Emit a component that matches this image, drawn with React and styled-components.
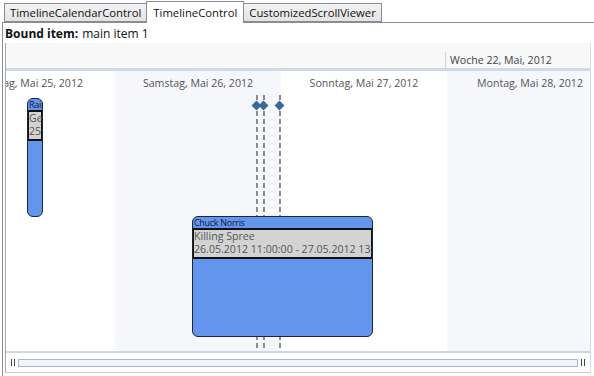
import React from 'react'
import styled, { createGlobalStyle } from 'styled-components'

const Global = createGlobalStyle`
body {
  margin: 0;
  background: #fff;
  font-family: "Open Sans", "Liberation Sans", sans-serif;
}
`

const Page = styled.div`
width: 594px;
height: 376px;
display: flex;
flex-direction: column;
overflow: hidden;
background: #fff;
`

const TabStrip = styled.div`
display: flex;
align-items: flex-end;
height: 22px;
padding-left: 4px;
position: relative;
z-index: 1;
`

const Tab = styled.div`
height: ${p => (p.active ? '22px' : '19px')};
margin-bottom: ${p => (p.active ? '-1px' : '0')};
padding: 0 ${p => (p.active ? '6px' : '5px')};
margin-left: ${p => (p.active ? '-1px' : '0')};
margin-right: ${p => (p.active ? '-1px' : '0')};
border: 1px solid #898c95;
border-bottom: ${p => (p.active ? 'none' : '1px solid #898c95')};
background: ${p => (p.active ? '#fff' : 'linear-gradient(#f3f3f3, #e3e3e3)')};
font-size: 11.3px;
color: #111;
display: flex;
align-items: center;
box-sizing: border-box;
position: relative;
z-index: ${p => (p.active ? 2 : 1)};
& + & {
  border-left: ${p => (p.active ? '1px solid #898c95' : 'none')};
}
`

const Panel = styled.div`
flex: 1;
border-top: 1px solid #898c95;
border-left: 1px solid #8c8e94;
margin-left: 2px;
display: flex;
flex-direction: column;
padding: 0 3px 3px 2px;
`

const BoundLine = styled.div`
font-size: 12px;
color: #111;
height: 19px;
display: flex;
align-items: center;
padding-top: 1px;
b {
  font-weight: 700;
  margin-right: 4px;
}
`

const Timeline = styled.div`
flex: 1;
border-left: 1px solid #a6a6a6;
border-right: 1px solid #d6dbe4;
border-bottom: 1px solid #c3cad6;
display: flex;
flex-direction: column;
overflow: hidden;
`

const Header = styled.div`
height: 25px;
background: #f8f8f8;
display: flex;
justify-content: flex-end;
border-bottom: 3px solid #cfdae8;
`

const WeekCell = styled.div`
width: 140px;
margin-top: 9px;
border-left: 1px solid #d4d4d4;
font-size: 10.6px;
color: #444;
padding-left: 4px;
display: flex;
align-items: center;
`

const Body = styled.div`
flex: 1;
position: relative;
overflow: hidden;
`

const Days = styled.div`
display: flex;
height: 100%;
margin-left: -57px;
`

const Day = styled.div`
flex: 0 0 166px;
background: ${p => (p.shaded ? '#f5f7fb' : '#fff')};
font-size: 10.6px;
color: #555;
text-align: center;
padding-top: 5px;
white-space: nowrap;
`

const Marker = styled.div`
position: absolute;
top: 24px;
bottom: 0;
width: 2px;
background: repeating-linear-gradient(#8c8c8c 0 5px, transparent 5px 8px);
`

const Diamond = styled.div`
position: absolute;
top: 7px;
left: -3px;
width: 7px;
height: 7px;
background: #3a679e;
transform: rotate(45deg);
`

const Item = styled.div`
position: absolute;
background: #6495ed;
border: 1px solid #1b2638;
border-radius: 6px;
overflow: hidden;
`

const ItemTitle = styled.div`
height: 11px;
font-size: 9px;
line-height: 11px;
color: #0c1a40;
padding-left: 1px;
white-space: nowrap;
letter-spacing: -0.3px;
`

const ItemDetail = styled.div`
background: #d3d3d3;
border: 1px solid #111;
border-width: 2px 1px 2px 1px;
font-size: 10.6px;
line-height: 13px;
color: #555;
white-space: nowrap;
padding: 0 1px 1px 0;
`

const Scroll = styled.div`
height: 19px;
border-top: 2px solid #cdd6e2;
display: flex;
align-items: center;
padding: 0 5px 0 5px;
gap: 3px;
`

const Grip = styled.div`
width: 4px;
height: 7px;
border-left: 1px solid #444;
border-right: 1px solid #444;
box-sizing: border-box;
`

const Track = styled.div`
flex: 1;
height: 6px;
border: 1px solid #a8b8cc;
background: #f2f5f9;
`

const markers = [250, 257, 273]

const App = () => {
    return (
        <Page>
            <Global />
            <TabStrip>
                <Tab>TimelineCalendarControl</Tab>
                <Tab active>TimelineControl</Tab>
                <Tab>CustomizedScrollViewer</Tab>
            </TabStrip>
            <Panel>
                <BoundLine><b>Bound item:</b> main item 1</BoundLine>
                <Timeline>
                    <Header>
                        <WeekCell>Woche 22, Mai, 2012</WeekCell>
                    </Header>
                    <Body>
                        <Days>
                            <Day>Freitag, Mai 25, 2012</Day>
                            <Day shaded>Samstag, Mai 26, 2012</Day>
                            <Day>Sonntag, Mai 27, 2012</Day>
                            <Day shaded>Montag, Mai 28, 2012</Day>
                        </Days>
                        {markers.map(x => (
                            <Marker key={x} style={{ left: x }}>
                                <Diamond />
                            </Marker>
                        ))}
                        <Item style={{ left: 21, top: 27, width: 14, height: 117 }}>
                            <ItemTitle>Rainer</ItemTitle>
                            <ItemDetail>Ge<br />25</ItemDetail>
                        </Item>
                        <Item style={{ left: 186, top: 145, width: 179, height: 119 }}>
                            <ItemTitle>Chuck Norris</ItemTitle>
                            <ItemDetail>Killing Spree<br />26.05.2012 11:00:00 - 27.05.2012 13:00:00</ItemDetail>
                        </Item>
                    </Body>
                    <Scroll>
                        <Grip />
                        <Track />
                        <Grip />
                    </Scroll>
                </Timeline>
            </Panel>
        </Page>
    )
}

export default App
